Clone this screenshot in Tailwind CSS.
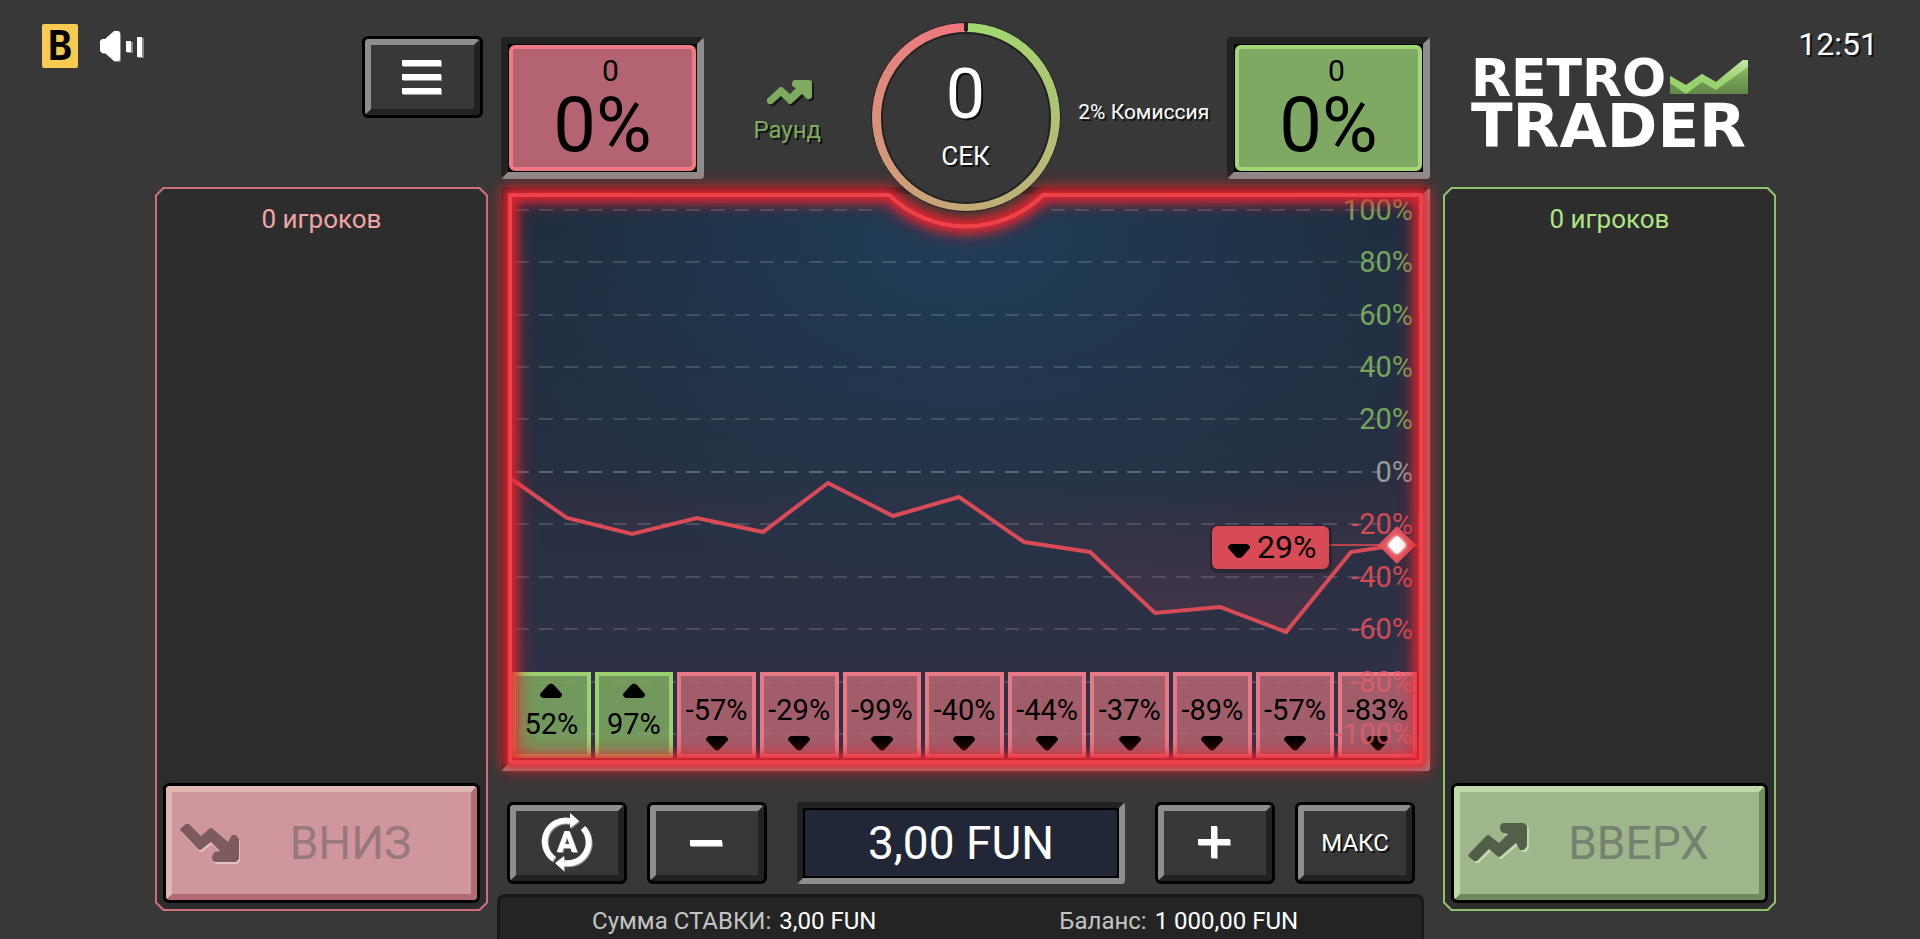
<!DOCTYPE html>
<html lang="ru">
<head>
  <meta charset="UTF-8">
  <meta name="viewport" content="width=device-width, initial-scale=1">
  <title>Retro Trader</title>
  <script src="https://cdn.jsdelivr.net/npm/@tailwindcss/browser@4"></script>
</head>
<body class="min-h-screen flex flex-col bg-[#383838] font-[Roboto,sans-serif] text-white overflow-x-hidden">

<!-- HEADER -->
<header class="grid grid-cols-[488px_minmax(0,1fr)_477px] gap-[13px] pb-2">
  <div class="flex items-start pl-[42px]">
    <div class="mt-6 w-9 h-11 rounded-xs bg-[#f7cb50] text-black text-[40px] leading-11 font-bold text-center font-['DejaVu_Sans_Mono',monospace]">B</div>
    <button aria-label="Звук" class="mt-[30px] ml-[22px]">
      <svg class="w-[46px] h-9" viewBox="0 0 46 36">
        <g fill="#888" transform="translate(1 1)">
          <path d="M0 11 2 9H5L14 1H19L20 3V29L19 31H14L5 23H2L0 21Z" /><path d="M26 11h6v11h-6zM37 7h6v20h-6z" />
        </g>
        <g fill="#fff">
          <path d="M0 11 2 9H5L14 1H19L20 3V29L19 31H14L5 23H2L0 21Z" /><path d="M26 11h5v11h-5zM37 7h5v20h-5z" />
        </g>
      </svg>
    </button>
    <button aria-label="Меню" class="mt-9 ml-auto mr-[5px] w-[121px] h-[82px] rounded-md border-3 border-black bg-black">
      <span class="flex h-full items-center justify-center rounded-sm border-6 border-t-[#8e8e8e] border-l-[#8e8e8e] border-r-[#222] border-b-[#222] bg-[#383838]">
        <svg class="w-[41px] h-9" viewBox="0 0 41 36">
          <path fill="#999" d="M1 2h39v6H1zM1 16h39v6H1zM1 30h39v6H1z" />
          <path fill="#fff" d="M0 1h39v6H0zM0 15h39v6H0zM0 29h39v6H0z" />
        </svg>
      </span>
    </button>
  </div>

  <div class="flex">
    <!-- Down pool -->
    <div class="mt-[37px] w-[203px] h-[142px] rounded-sm border-7 border-t-[#222] border-l-[#222] border-r-[#8e8e8e] border-b-[#8e8e8e] bg-black">
      <div class="m-px h-[126px] rounded-md border-4 border-[#ef7985] bg-[#b46372] text-black text-center">
        <p class="pt-1 pl-4 text-[30px] leading-9">0</p>
        <p class="text-[76px] leading-[72px]">0%</p>
      </div>
    </div>

    <div class="flex-1 flex flex-col items-center pt-20 text-[#7fab5e]">
      <svg class="ml-2 w-12 h-7" viewBox="0 0 48 28">
        <path fill="#161616" transform="translate(2 2)" d="M28 0H42Q45 0 45 3V17Q43 20 40 19L35 14 24 24H22L14 16 5 24Q1 25 0 22V19L13 7H15L23 14 29 8Q25 7 25 4 25 0 28 0Z" />
        <path fill="#7fab5e" d="M28 0H42Q45 0 45 3V17Q43 20 40 19L35 14 24 24H22L14 16 5 24Q1 25 0 22V19L13 7H15L23 14 29 8Q25 7 25 4 25 0 28 0Z" />
      </svg>
      <p class="mt-2 text-2xl leading-7 [text-shadow:2px_2px_0_#111]">Раунд</p>
    </div>

    <!-- Countdown -->
    <div class="z-10 mt-[22px] -mb-9 w-[190px] h-[190px] rounded-full border border-[#222] p-px bg-[conic-gradient(#222_0_1deg,#a0da70_1deg,#c3a976_50%,#f17680_359deg,#222_359deg)]">
      <div class="m-2 h-[172px] rounded-full border-2 border-[#222] bg-[#383838] text-center [text-shadow:2px_2px_0_#111]">
        <p class="pt-6 text-[70px] leading-[72px]">0</p>
        <p class="pt-2 text-[26px] leading-9">СЕК</p>
      </div>
    </div>

    <p class="flex-1 pt-[98px] text-center text-[21px] leading-7 whitespace-nowrap [text-shadow:2px_2px_0_#111]">2% Комиссия</p>

    <!-- Up pool -->
    <div class="mt-[37px] w-[203px] h-[142px] rounded-sm border-7 border-t-[#222] border-l-[#222] border-r-[#8e8e8e] border-b-[#8e8e8e] bg-black">
      <div class="m-px h-[126px] rounded-md border-4 border-[#a0d973] bg-[#7fa963] text-black text-center">
        <p class="pt-1 pl-4 text-[30px] leading-9">0</p>
        <p class="text-[76px] leading-[72px]">0%</p>
      </div>
    </div>
  </div>

  <div class="flex items-start justify-between pl-7 pr-[42px]">
    <!-- Logo -->
    <div class="mt-[54px] font-bold font-['DejaVu_Sans',sans-serif]">
      <div class="flex items-center gap-1">
        <span class="text-[52px] leading-12">RETRO</span>
        <svg class="w-[78px] h-9" viewBox="0 0 78 36">
          <defs>
            <linearGradient id="logoBase" x1="0" y1="0" x2="0" y2="1">
              <stop offset="0" stop-color="#93c66a" /><stop offset="1" stop-color="#628548" />
            </linearGradient>
            <linearGradient id="logoBand" x1="0" y1="1" x2="0" y2="0">
              <stop offset=".4" stop-color="#98d26d" /><stop offset="1" stop-color="#c3e6ab" />
            </linearGradient>
          </defs>
          <path fill="url(#logoBase)" d="M0 16 16 25 32 14 46 22 73 0H78V34H0Z" />
          <path fill="url(#logoBand)" d="M0 16 16 25 32 14 46 22 73 0H78V7L46 30 32 22 16 34 0 23Z" />
        </svg>
      </div>
      <div class="text-[61px] leading-12">TRADER</div>
    </div>
    <time class="mt-6 text-[32px] leading-10 [text-shadow:2px_2px_0_#111]">12:51</time>
  </div>
</header>

<main class="flex-1 grid grid-cols-[333px_minmax(0,1fr)_333px] gap-[13px] pl-[155px] pr-[144px]">

  <!-- DOWN PLAYERS -->
  <section class="mb-7 p-[2px] bg-[#cf6f7a] [clip-path:polygon(8px_0,calc(100%_-_8px)_0,100%_8px,100%_calc(100%_-_8px),calc(100%_-_8px)_100%,8px_100%,0_calc(100%_-_8px),0_8px)]">
    <div class="flex flex-col h-full p-[6px] bg-[#2d2d2d] [clip-path:polygon(7px_0,calc(100%_-_7px)_0,100%_7px,100%_calc(100%_-_7px),calc(100%_-_7px)_100%,7px_100%,0_calc(100%_-_7px),0_7px)]">
      <h2 class="pt-[6px] text-center text-[26px] leading-9 text-[#f1a5a5]">0 игроков</h2>
      <button class="mt-auto h-[120px] rounded-md border-3 border-black bg-black" disabled>
        <span class="flex h-full items-center rounded-sm border-6 border-t-[#dfb8b3] border-l-[#dfb8b3] border-r-[#b06b74] border-b-[#b06b74] bg-[#cf969d] pl-2">
          <svg class="w-[62px] h-[41px]" viewBox="0 0 62 41">
            <path fill="#e7c1bd" transform="translate(1 41) scale(1 -1)" d="M0 32 18 13Q20 11 22 13L31 20 40 11 35 10Q32 8 32 5 32 0 36 0H56L59 3V23L56 27H52L48 20 33 33Q31 35 29 33L21 26 9 38H6L1 34Z" />
            <path fill="#7d5a5e" transform="translate(0 39) scale(1 -1)" d="M0 32 18 13Q20 11 22 13L31 20 40 11 35 10Q32 8 32 5 32 0 36 0H56L59 3V23L56 27H52L48 20 33 33Q31 35 29 33L21 26 9 38H6L1 34Z" />
          </svg>
          <span class="flex-1 pr-3 text-center text-[46px] leading-12 text-[#98787c]">ВНИЗ</span>
        </span>
      </button>
    </div>
  </section>

  <section class="flex flex-col">
    <!-- CHART -->
    <div class="relative rounded-sm border-7 border-t-[#222] border-l-[#222] border-r-[#8e8e8e] border-b-[#8e8e8e] bg-black">
      <svg class="block w-full" viewBox="7 7 915 570" font-family="Roboto, sans-serif">
        <defs>
          <linearGradient id="bg" x1="0" y1="0" x2="0" y2="1">
            <stop offset="0" stop-color="#1e293a" /><stop offset=".6" stop-color="#2a3044" /><stop offset="1" stop-color="#303248" />
          </linearGradient>
          <radialGradient id="sky" cx=".5" cy=".08" r=".62">
            <stop offset="0" stop-color="#1f3d56" /><stop offset="1" stop-color="#1f3d56" stop-opacity="0" />
          </radialGradient>
          <linearGradient id="loss" gradientUnits="userSpaceOnUse" x1="0" y1="285" x2="0" y2="445">
            <stop offset="0" stop-color="#d84a56" stop-opacity="0" /><stop offset="1" stop-color="#d84a56" stop-opacity=".14" />
          </linearGradient>
        </defs>
        <path fill="#383838" d="M388 7A110 110 0 0 0 542 7Z" />
        <path fill="url(#bg)" d="M8 8H388A110 110 0 0 0 542 8H921V576H8Z" />
        <path fill="url(#sky)" d="M8 8H388A110 110 0 0 0 542 8H921V576H8Z" />

        <g stroke="#fff" stroke-opacity=".15" stroke-width="2" stroke-dasharray="14 10 14 11">
          <path d="M14 23H378M550 23H880M14 75H880M14 128H880M14 180H880M14 232H880M14 337H880M14 390H880M14 442H880M14 495H880M14 547H880" />
          <path stroke-opacity=".25" d="M14 285H880" />
        </g>

        <path fill="url(#loss)" d="M9 285V291L66 331 131 347 196 331 262 345 327 296 392 329 458 310 523 355 589 365 654 426 719 420 785 445 850 365 896 358V285Z" />
        <path stroke="#b84450" stroke-width="2" d="M828 358H917" />
        <path fill="none" stroke="#d84a56" stroke-width="4" d="M9 291 66 331 131 347 196 331 262 345 327 296 392 329 458 310 523 355 589 365 654 426 719 420 785 445 850 365 896 358" />

        <rect x="709" y="338" width="122" height="48" rx="7" fill="#111" opacity=".35" />
        <rect x="711" y="339" width="117" height="43" rx="6" fill="#d84a56" />
        <path fill="#000" d="M730 357H746Q749 358 749 361L741 370Q738 372 735 370L727 361Q727 358 730 357Z" />
        <text x="756" y="371" font-size="32" fill="#000">29%</text>
      </svg>

      <!-- Last rounds -->
      <ol id="history" class="absolute left-1 right-[6px] bottom-[6px] h-[86px] grid grid-cols-11 gap-1 text-center text-[29px] leading-9 text-black"></ol>

      <!-- Scale, current value and neon frame -->
      <svg class="absolute -inset-[7px] overflow-visible pointer-events-none" viewBox="0 0 929 584" fill="none" font-family="Roboto, sans-serif">
        <defs>
          <filter id="near" filterUnits="userSpaceOnUse" x="-60" y="-60" width="1049" height="704"><feGaussianBlur stdDeviation="5" /></filter>
          <filter id="far" filterUnits="userSpaceOnUse" x="-60" y="-60" width="1049" height="704"><feGaussianBlur stdDeviation="9" /></filter>
          <filter id="shine" x="-50%" y="-50%" width="200%" height="200%"><feGaussianBlur stdDeviation="2" /></filter>
        </defs>
        <g text-anchor="end" font-size="29" fill="#76a55a">
          <text x="912" y="33">100%</text>
          <text x="912" y="85">80%</text>
          <text x="912" y="138">60%</text>
          <text x="912" y="190">40%</text>
          <text x="912" y="242">20%</text>
          <text x="912" y="295" fill="#999">0%</text>
          <g fill="#d24a55">
            <text x="912" y="347">-20%</text>
            <text x="912" y="400">-40%</text>
            <text x="912" y="452">-60%</text>
          </g>
          <g fill="#e85c69" fill-opacity=".8">
            <text x="912" y="505">-80%</text>
            <text x="912" y="557">-100%</text>
          </g>
        </g>

        <path fill="#e2525d" d="M896 339 915 358 896 377 877 358Z" />
        <rect x="889" y="351" width="14" height="14" rx="3" fill="#fff" transform="rotate(45 896 358)" filter="url(#shine)" />
        <rect x="889" y="351" width="14" height="14" rx="3" fill="#fff" transform="rotate(45 896 358)" />

        <path stroke="#e3202a" stroke-opacity=".5" stroke-width="18" filter="url(#far)" d="M9 8H388A110 110 0 0 0 542 8H920V575H9Z" />
        <path stroke="#f0252e" stroke-opacity=".9" stroke-width="12" filter="url(#near)" d="M9 8H388A110 110 0 0 0 542 8H920V575H9Z" />
        <path stroke="#ee424b" stroke-width="4" stroke-linejoin="round" d="M9 8H388A110 110 0 0 0 542 8H920V575H9Z" />
      </svg>
    </div>

    <!-- BET CONTROLS -->
    <div class="mt-[31px] pl-[6px] pr-[15px] flex gap-5">
      <button aria-label="Автоставка" class="w-[120px] h-[82px] rounded-md border-3 border-black bg-black">
        <span class="flex h-full items-center justify-center rounded-sm border-6 border-t-[#8e8e8e] border-l-[#8e8e8e] border-r-[#222] border-b-[#222] bg-[#383838]">
          <svg class="w-[54px] h-[60px] drop-shadow-[1px_1px_0_#999]" viewBox="0 0 54 60" fill="none">
            <path stroke="#fff" stroke-width="6" d="M14 46A21 21 0 0 1 30 8M43 15A21 21 0 0 1 24 50" />
            <path fill="#fff" d="M30 0 39 8 30 15ZM24 43 15 50 24 58Z" />
            <text x="27" y="39" text-anchor="middle" fill="#fff" font-size="30" font-weight="900">A</text>
          </svg>
        </span>
      </button>
      <button aria-label="Уменьшить ставку" class="w-[120px] h-[82px] rounded-md border-3 border-black bg-black">
        <span class="flex h-full items-center justify-center rounded-sm border-6 border-t-[#8e8e8e] border-l-[#8e8e8e] border-r-[#222] border-b-[#222] bg-[#383838]">
          <svg class="w-[34px] h-[34px]" viewBox="0 0 34 34">
            <path fill="#999" d="M1 16h32v5H1z" /><path fill="#fff" d="M0 14h32v6H0z" />
          </svg>
        </span>
      </button>
      <div class="flex-1 mx-[10px] h-[82px] rounded-sm border-6 border-t-[#222] border-l-[#222] border-r-[#8e8e8e] border-b-[#8e8e8e] bg-black">
        <input aria-label="Сумма ставки" type="text" value="3,00 FUN" class="block w-full h-full rounded-sm border-2 border-black bg-[#222738] text-center text-[46px] leading-12 text-white">
      </div>
      <button aria-label="Увеличить ставку" class="w-[120px] h-[82px] rounded-md border-3 border-black bg-black">
        <span class="flex h-full items-center justify-center rounded-sm border-6 border-t-[#8e8e8e] border-l-[#8e8e8e] border-r-[#222] border-b-[#222] bg-[#383838]">
          <svg class="w-[34px] h-[34px]" viewBox="0 0 34 34">
            <path fill="#999" d="M14 1h6v13h13v6H20v13h-6V20H1v-6h13z" /><path fill="#fff" d="M13 0h6v13h13v6H19v13h-6V19H0v-6h13z" />
          </svg>
        </span>
      </button>
      <button class="w-[120px] h-[82px] rounded-md border-3 border-black bg-black">
        <span class="flex h-full items-center justify-center rounded-sm border-6 border-t-[#8e8e8e] border-l-[#8e8e8e] border-r-[#222] border-b-[#222] bg-[#383838] text-2xl [text-shadow:2px_2px_0_#111]">МАКС</span>
      </button>
    </div>

    <!-- BALANCE -->
    <dl class="mt-[10px] -ml-1 mr-[6px] flex-1 grid grid-cols-2 rounded-t-lg border-3 border-b-0 border-[#191919] bg-[#242424] pt-[6px] text-2xl leading-9">
      <div class="flex justify-center gap-2 pl-2">
        <dt class="text-[#c4c4c4]">Сумма СТАВКИ:</dt>
        <dd>3,00 FUN</dd>
      </div>
      <div class="flex justify-center gap-2 pr-6">
        <dt class="text-[#c4c4c4]">Баланс:</dt>
        <dd>1 000,00 FUN</dd>
      </div>
    </dl>
  </section>

  <!-- UP PLAYERS -->
  <section class="mb-7 p-[2px] bg-[#8fc06c] [clip-path:polygon(8px_0,calc(100%_-_8px)_0,100%_8px,100%_calc(100%_-_8px),calc(100%_-_8px)_100%,8px_100%,0_calc(100%_-_8px),0_8px)]">
    <div class="flex flex-col h-full p-[6px] bg-[#2d2d2d] [clip-path:polygon(7px_0,calc(100%_-_7px)_0,100%_7px,100%_calc(100%_-_7px),calc(100%_-_7px)_100%,7px_100%,0_calc(100%_-_7px),0_7px)]">
      <h2 class="pt-[6px] text-center text-[26px] leading-9 text-[#aee584]">0 игроков</h2>
      <button class="mt-auto h-[120px] rounded-md border-3 border-black bg-black" disabled>
        <span class="flex h-full items-center rounded-sm border-6 border-t-[#bfd9a8] border-l-[#bfd9a8] border-r-[#70895d] border-b-[#70895d] bg-[#9fb58b] pl-2">
          <svg class="w-[62px] h-[41px]" viewBox="0 0 62 41">
            <path fill="#c2dbac" transform="translate(2 2)" d="M0 32 18 13Q20 11 22 13L31 20 40 11 35 10Q32 8 32 5 32 0 36 0H56L59 3V23L56 27H52L48 20 33 33Q31 35 29 33L21 26 9 38H6L1 34Z" />
            <path fill="#535f49" d="M0 32 18 13Q20 11 22 13L31 20 40 11 35 10Q32 8 32 5 32 0 36 0H56L59 3V23L56 27H52L48 20 33 33Q31 35 29 33L21 26 9 38H6L1 34Z" />
          </svg>
          <span class="flex-1 pr-3 text-center text-[46px] leading-12 text-[#768270]">ВВЕРХ</span>
        </span>
      </button>
    </div>
  </section>
</main>

<script>
  const rounds = [52, 97, -57, -29, -99, -40, -44, -37, -89, -57, -83];
  const up = '<svg class="mx-auto w-[22px] h-[15px]" viewBox="0 0 22 15"><path d="M0 11 8 2Q11-1 14 2L22 11Q22 14 19 15H3Q0 14 0 11Z" /></svg>';
  const down = '<svg class="mx-auto w-[22px] h-[15px]" viewBox="0 0 22 15"><path d="M0 4 8 13Q11 16 14 13L22 4Q22 1 19 0H3Q0 1 0 4Z" /></svg>';

  document.getElementById('history').innerHTML = rounds.map(r => r > 0
    ? `<li class="border-4 border-[#9bd16f] bg-[#7faa62]/85 pt-[7px]">${up}<p class="pt-2">${r}%</p></li>`
    : `<li class="border-4 border-[#e97886] bg-[#b66572]/85 pt-4">
         <p class="pb-2">${r}%</p>${down}</li>`
  ).join('');
</script>
</body>
</html>
